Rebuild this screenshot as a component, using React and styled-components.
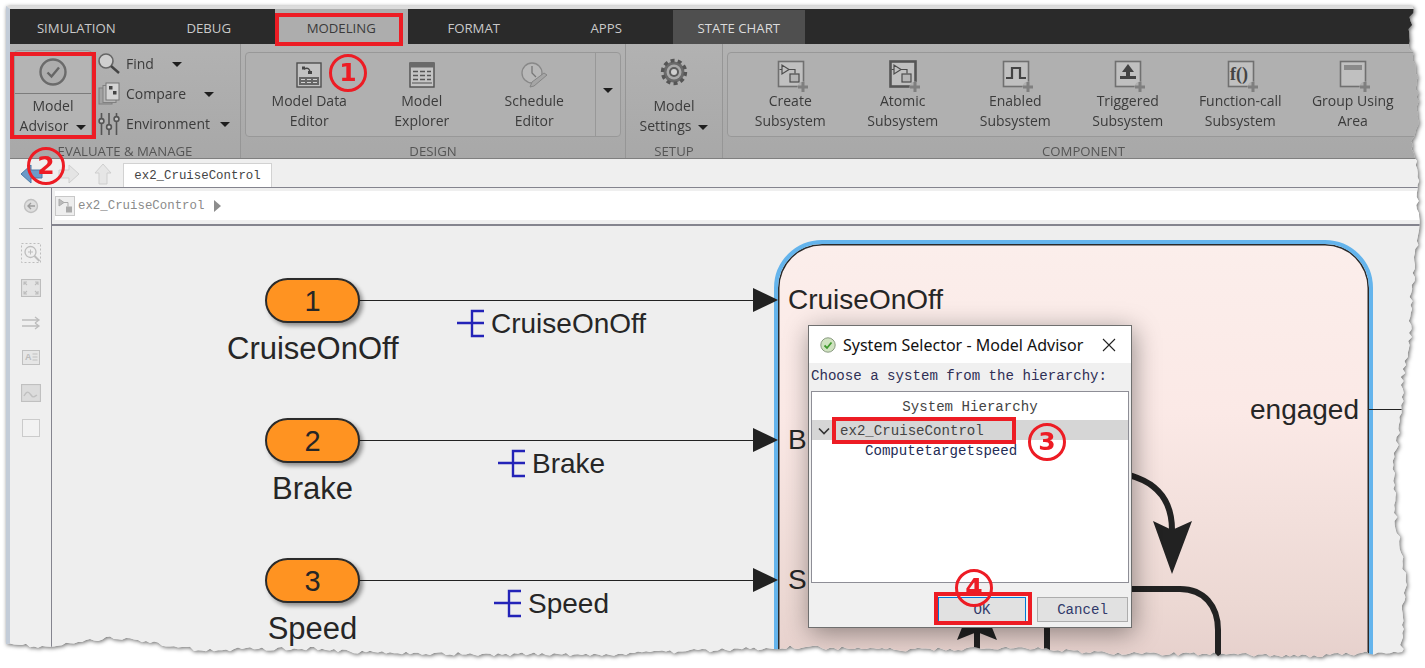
import React from 'react'
import styled, { createGlobalStyle } from 'styled-components'

const GlobalStyle = createGlobalStyle`
  html, body { margin: 0; padding: 0; background: #fff; }
  body { width: 1425px; height: 668px; overflow: hidden; font-family: "Open Sans", "Noto Sans", sans-serif; }
`

// torn paper edge: control points read off the picture, small noise added on top
const RIGHT_EDGE = [[9,1412],[40,1409],[50,1411],[70,1417],[130,1418],[145,1411],[170,1418],[230,1418],[260,1415],[300,1411],[340,1410],[385,1401],[400,1404],[470,1393],[530,1397],[580,1406],[610,1402],[650,1402]]
const BOTTOM_EDGE = [[1402,652],[1300,656],[1200,654],[1100,653],[1030,648],[900,650],[790,647],[600,655],[377,653],[300,648],[200,650],[113,637],[50,646],[6,645]]

function lerp(points, v) {
  for (let i = 0; i < points.length - 1; i++) {
    const [a, b] = points[i]
    const [c, d] = points[i + 1]
    if ((v >= a && v <= c) || (v <= a && v >= c)) return b + ((v - a) / (c - a)) * (d - b)
  }
  return points[points.length - 1][1]
}

function tornClip() {
  let seed = 17
  const noise = () => {
    seed = (seed * 9301 + 49297) % 233280
    return seed / 233280 - 0.5
  }
  const pts = ['0px 0px', `${1412 - 6}px 0px`]
  for (let y = 9; y <= 650; y += 4) pts.push(`${(lerp(RIGHT_EDGE, y) - 6 + noise() * 4).toFixed(1)}px ${y - 6}px`)
  for (let x = 1402; x >= 6; x -= 4) pts.push(`${x - 6}px ${(lerp(BOTTOM_EDGE, x) - 6 + noise() * 4).toFixed(1)}px`)
  return `polygon(${pts.join(',')})`
}
const TORN = tornClip()

const Shot = styled.div`
  position: relative;
  width: 1425px;
  height: 668px;
  overflow: hidden;
`
const Paper = styled.div`
  padding: 6px 0 0 6px;
  filter: drop-shadow(1px 1px 2px rgba(0,0,0,.6));
`
const Window = styled.div`
  clip-path: ${TORN};
  width: 1419px;
  height: 660px;
  box-sizing: border-box;
  display: flex;
  flex-direction: column;
  background: #eee;
  border-top: 3px solid #dcdcdc;
  border-left: 4px solid #c3ccd8;
`

const TabBar = styled.div`
  display: flex;
  height: 35px;
  flex: none;
  background: #2a2a2a;
`
const Tab = styled.div`
  width: 132.5px;
  display: flex;
  align-items: center;
  justify-content: center;
  box-sizing: border-box;
  padding-top: 2px;
  margin-top: ${p => (p.$contextual ? '1px' : '0')};
  font-size: 13.2px;
  color: ${p => (p.$active ? '#3a3a3a' : p.$contextual ? '#dcdcdc' : '#c9c9c9')};
  background: ${p => (p.$active ? '#adadad' : p.$contextual ? '#4f4f4f' : 'transparent')};
`

const Ribbon = styled.div`
  display: flex;
  height: 115px;
  flex: none;
  box-sizing: border-box;
  background: linear-gradient(#b2b2b2, #a8a8a8);
  border-bottom: 1px solid #7f7f7f;
  color: #3b3b3b;
  font-size: 14px;
  line-height: 20px;
`
const Section = styled.div`
  flex: ${p => (p.$grow ? '1' : 'none')};
  width: ${p => (p.$w ? p.$w + 'px' : 'auto')};
  box-sizing: border-box;
  padding: 8px 4px 0;
  border-right: ${p => (p.$grow ? 'none' : '1px solid #969696')};
  display: flex;
  flex-direction: column;
  min-width: 0;
`
const SectionBody = styled.div`
  height: 85px;
  flex: none;
  display: flex;
`
const SectionLabel = styled.div`
  height: 22px;
  line-height: 29px;
  padding-left: ${p => p.$shift || 0}px;
  text-align: center;
  font-size: 13.2px;
  color: #555;
`
const Gallery = styled.div`
  flex: 1;
  display: flex;
  box-sizing: border-box;
  padding-left: ${p => p.$pad}px;
  border: 1px solid #989898;
  border-radius: 4px;
  background: #b0b0b0;
`
const GalleryItem = styled.div`
  width: 112.5px;
  flex: none;
  display: flex;
  flex-direction: column;
  align-items: center;
  text-align: center;
  white-space: pre-line;
`
const ItemIcon = styled.div`
  height: 32px;
  margin-top: 6px;
  display: flex;
  align-items: center;
  justify-content: center;
`
const GalleryMore = styled.div`
  margin-left: auto;
  width: 24px;
  display: flex;
  align-items: center;
  justify-content: center;
  padding-bottom: 8px;
  border-left: 1px solid #989898;
`
const Caret = styled.span`
  display: inline-block;
  width: 0;
  height: 0;
  margin-left: ${p => p.$gap || 0}px;
  vertical-align: middle;
  border-left: 5.5px solid transparent;
  border-right: 5.5px solid transparent;
  border-top: 5.5px solid #1e1e1e;
`
const AdvisorButton = styled.div`
  width: 78px;
  height: 88px;
  margin-top: -2px;
  flex: none;
  box-sizing: border-box;
  border: 1px solid #999;
  border-radius: 4px;
  text-align: center;
  background: #b4b4b4;
`
const AdvisorTop = styled.div`
  height: 42px;
  margin-bottom: 2px;
  display: flex;
  align-items: center;
  justify-content: center;
  border-bottom: 1px solid #7c7c7c;
`
const SmallList = styled.div`
  display: flex;
  flex-direction: column;
  margin: -3px 0 0 5px;
`
const SmallRow = styled.div`
  height: 30px;
  flex: none;
  display: flex;
  align-items: center;
  white-space: nowrap;
`
const SmallIcon = styled.div`
  width: 24px;
  margin-right: 5px;
  display: flex;
  justify-content: center;
`
const SetupItem = styled.div`
  width: 100%;
  text-align: center;
`
const SetupIcon = styled.div`
  height: 44px;
  box-sizing: border-box;
  padding-bottom: 4px;
  display: flex;
  align-items: center;
  justify-content: center;
`

const ToolStrip = styled.div`
  height: 27px;
  flex: none;
  margin-top: 1px;
  display: flex;
  align-items: flex-end;
  background: #efefef;
  box-sizing: border-box;
  padding-left: 10px;
`
const NavRow = styled.div`
  width: 103px;
  height: 24px;
  margin-bottom: 1px;
  display: flex;
  align-items: center;
  gap: 14px;
`
const FileTab = styled.div`
  width: 149px;
  height: 24px;
  box-sizing: border-box;
  background: #fff;
  border: 1px solid #d2d2d2;
  border-bottom: none;
  text-align: center;
  line-height: 24px;
  font-family: "Liberation Mono", monospace;
  font-size: 12.4px;
  color: #444;
`
const Workspace = styled.div`
  flex: 1;
  display: flex;
  min-height: 0;
  border-top: 1px solid #84848e;
`
const Rail = styled.div`
  width: 42px;
  flex: none;
  box-sizing: border-box;
  border-right: 1px solid #84848e;
  background: #efefef;
  display: flex;
  flex-direction: column;
  align-items: center;
`
const RailSlot = styled.div`
  height: 35px;
  flex: none;
  display: flex;
  align-items: center;
  justify-content: center;
`
const RailRule = styled.div`
  width: 24px;
  height: 1px;
  flex: none;
  margin: 5px 0 6px;
  background: #b5b5b5;
`
const Main = styled.div`
  flex: 1;
  display: flex;
  flex-direction: column;
  min-width: 0;
`
const CrumbBar = styled.div`
  height: 38px;
  flex: none;
  box-sizing: border-box;
  padding: 3px 0 4px 3px;
  background: #efefef;
  border-bottom: 2px solid #84848e;
`
const Crumb = styled.div`
  height: 100%;
  display: flex;
  align-items: center;
  background: #fff;
  font-family: "Liberation Mono", monospace;
  font-size: 12.4px;
  color: #8a8a8a;
`
const CrumbIcon = styled.div`
  width: 20px;
  height: 20px;
  margin-right: 3px;
`
const CrumbArrow = styled.span`
  margin-left: 10px;
  width: 0;
  height: 0;
  border-top: 6px solid transparent;
  border-bottom: 6px solid transparent;
  border-left: 7px solid #8d8d8d;
`
const Canvas = styled.div`
  position: relative;
  flex: 1;
  overflow: hidden;
  background: #eeeeee;
  color: #262626;
  font-family: "Liberation Sans", Arial, sans-serif;
`
const Wires = styled.svg`
  position: absolute;
  left: 0;
  top: 0;
`
const StateBox = styled.div`
  position: absolute;
  left: 722px;
  top: 14px;
  width: 599px;
  height: 620px;
  box-sizing: border-box;
  border: 4px solid #64b4ec;
  border-radius: 48px;
  box-shadow: inset 0 0 0 1.5px #2a2a2a;
  background: linear-gradient(#fbeeeb 0, #fbe9e6 170px, #ecd8d3 360px, #e6d0cc 420px);
`
const Pill = styled.div`
  position: absolute;
  left: ${p => p.$x}px;
  top: ${p => p.$y}px;
  width: 95px;
  height: 45px;
  box-sizing: border-box;
  border: 2px solid #2b2b2b;
  border-radius: 23px;
  background: #ff9321;
  box-shadow: 3px 3px 4px rgba(0,0,0,.4);
  font-size: 29px;
  line-height: 42px;
  text-align: center;
`
const PortName = styled.div`
  position: absolute;
  left: 175px;
  width: 171px;
  top: ${p => p.$y}px;
  text-align: center;
  font-size: 31px;
  line-height: 36px;
  white-space: nowrap;
`
const BusLabel = styled.div`
  position: absolute;
  left: ${p => p.$x}px;
  top: ${p => p.$y}px;
  font-size: 28px;
  line-height: 32px;
  white-space: nowrap;
`
const ChartText = styled.div`
  position: absolute;
  left: ${p => p.$x}px;
  top: ${p => p.$y}px;
  font-size: 28px;
  line-height: 32px;
  white-space: nowrap;
`

const Dialog = styled.div`
  position: absolute;
  left: 756px;
  top: 99px;
  width: 324px;
  height: 303px;
  box-sizing: border-box;
  border: 1px solid #6f6f6f;
  background: #f0f0f0;
  box-shadow: 2px 5px 24px rgba(0,0,0,.4);
  font-family: "Liberation Mono", monospace;
  font-size: 14.1px;
  display: flex;
  flex-direction: column;
`
const DialogTitle = styled.div`
  height: 37px;
  flex: none;
  display: flex;
  align-items: center;
  background: #fff;
  padding: 0 15px 0 11px;
  font-family: "Noto Sans", sans-serif;
  font-size: 16px;
  color: #111;
`
const TitleText = styled.span`
  margin-left: 7px;
  flex: 1;
  white-space: nowrap;
`
const Prompt = styled.div`
  height: 28px;
  flex: none;
  line-height: 26px;
  padding-left: 2px;
  color: #2f2f55;
  white-space: nowrap;
`
const Tree = styled.div`
  height: 192px;
  flex: none;
  margin: 0 2px;
  box-sizing: border-box;
  border: 1px solid #8e8e96;
  background: #fff;
  color: #2c3550;
`
const TreeHead = styled.div`
  height: 28px;
  line-height: 30px;
  text-align: center;
  color: #444;
`
const TreeRow = styled.div`
  height: 20px;
  box-sizing: border-box;
  display: flex;
  align-items: center;
  padding: 1px 0 0 ${p => p.$indent}px;
  background: ${p => (p.$selected ? '#d6d6d6' : 'transparent')};
  color: ${p => (p.$selected ? '#444' : '#242c55')};
`
const Chevron = styled.svg`
  margin-right: 10px;
`
const DialogFoot = styled.div`
  flex: 1;
  display: flex;
  justify-content: flex-end;
  gap: 11px;
  padding: 14px 3px 0 0;
`
const DialogButton = styled.div`
  width: ${p => p.$w}px;
  height: 25px;
  box-sizing: border-box;
  text-align: center;
  line-height: 25px;
  background: #e1e1e1;
  color: #30396a;
  border: 1px solid ${p => (p.$focus ? '#0078d7' : '#adadad')};
`

const RedBox = styled.div`
  position: absolute;
  left: ${p => p.$x}px;
  top: ${p => p.$y}px;
  width: ${p => p.$w}px;
  height: ${p => p.$h}px;
  box-sizing: border-box;
  border: 4px solid #ed1c24;
`
const Badge = styled.div`
  position: absolute;
  left: ${p => p.$x - 19}px;
  top: ${p => p.$y - 19}px;
  width: 38px;
  height: 38px;
  box-sizing: border-box;
  border: 3px solid #ed1c24;
  border-radius: 50%;
  color: #ed1c24;
  font-family: "DejaVu Sans", sans-serif;
  font-weight: 700;
  font-size: 25px;
  line-height: 32px;
  text-align: center;
`
const BlockSvg = styled.svg`
  margin: 3px 0 0 5px;
`

const CheckCircle = () => (
  <svg width="30" height="30" viewBox="0 0 30 30">
    <circle cx="15" cy="15" r="12.5" fill="#adadad" stroke="#6b6b6b" strokeWidth="2.4" />
    <path d="M9.5 15.5l4 4 7.5-9" fill="none" stroke="#666" strokeWidth="2.4" />
  </svg>
)
const FindIcon = () => (
  <svg width="24" height="24" viewBox="0 0 24 24">
    <circle cx="9" cy="9" r="7" fill="#cfcfcf" stroke="#666" strokeWidth="1.6" />
    <path d="M14 14l8 7" stroke="#444" strokeWidth="2.4" />
  </svg>
)
const CompareIcon = () => (
  <svg width="22" height="24" viewBox="0 0 22 24">
    <rect x="1" y="6" width="13" height="16" fill="#a2a2a2" stroke="#7e7e7e" />
    <rect x="5" y="3.5" width="13" height="17" fill="#b6b6b6" stroke="#808080" />
    <rect x="8" y="1" width="13" height="17" fill="#d4d4d4" stroke="#777" />
    <path d="M11 4h3.5v3.5H11zM15 9h3.5v3.5H15z" fill="#444" />
  </svg>
)
const SlidersIcon = () => (
  <svg width="22" height="24" viewBox="0 0 22 24" stroke="#555" strokeWidth="1.6" fill="#c4c4c4">
    <path d="M3.5 1v22M11 1v22M18.5 1v22" />
    <circle cx="3.5" cy="9" r="2.4" />
    <circle cx="11" cy="15" r="2.4" />
    <circle cx="18.5" cy="7" r="2.4" />
  </svg>
)
const ModelDataIcon = () => (
  <svg width="26" height="26" viewBox="0 0 26 26">
    <rect x="1" y="1" width="24" height="24" fill="#c2c2c2" stroke="#4f4f4f" strokeWidth="1.4" />
    <path d="M8 7c4-2 6 0 6 4" fill="none" stroke="#444" strokeWidth="1.4" />
    <rect x="6" y="4.5" width="3" height="3" fill="#444" />
    <rect x="12" y="9" width="4" height="3" fill="#444" />
    <rect x="3" y="15" width="20" height="8" fill="#666" />
    <path d="M5 17.5h4M11 17.5h4M17 17.5h4M5 20.5h4M11 20.5h4M17 20.5h4" stroke="#d0d0d0" />
  </svg>
)
const ExplorerIcon = () => (
  <svg width="26" height="26" viewBox="0 0 26 26">
    <rect x="1" y="1" width="24" height="24" fill="#c4c4c4" stroke="#4f4f4f" strokeWidth="1.4" />
    <rect x="1" y="1" width="24" height="4.5" fill="#6a6a6a" />
    <path d="M4 9.5h5M11 9.5h5M18 9.5h4M4 13.5h5M11 13.5h5M18 13.5h4M4 17.5h5M11 17.5h5M18 17.5h4" stroke="#555" strokeWidth="1.6" />
    <rect x="3" y="20" width="20" height="2" fill="#8a8a8a" />
  </svg>
)
const ScheduleIcon = () => (
  <svg width="28" height="28" viewBox="0 0 28 28" fill="none">
    <circle cx="12" cy="12" r="10" fill="#b8b8b8" stroke="#888" strokeWidth="1.3" />
    <path d="M12 5v7l4 4" stroke="#777" strokeWidth="1.3" />
    <path d="M10 26l2-5 12-9 3 2-13 11z" fill="#a5a5a5" stroke="#858585" />
  </svg>
)
const GearIcon = () => (
  <svg width="28" height="28" viewBox="0 0 28 28">
    <circle cx="14" cy="14" r="10.5" fill="#6a6a6a" />
    <circle cx="14" cy="14" r="11.5" fill="none" stroke="#555" strokeWidth="3.4" strokeDasharray="4 3.2" />
    <circle cx="14" cy="14" r="7.5" fill="#a9a9a9" />
    <circle cx="14" cy="14" r="5" fill="#5c5c5c" />
    <circle cx="14" cy="14" r="3" fill="#cfcfcf" />
  </svg>
)
const BlockFrame = ({ heavy, children }) => (
  <BlockSvg width="32" height="33" viewBox="0 0 32 33">
    <rect x="1.5" y="1.5" width="25" height="25" fill="#c0c0c0" stroke={heavy ? '#555' : '#707070'} strokeWidth={heavy ? 2.6 : 1.6} />
    {children}
    <circle cx="26" cy="27" r="5.5" fill="#b0b0b0" />
    <path d="M24.5 22h3v3.5H31v3h-3.5V32h-3v-3.5H21v-3h3.5z" fill="#7f7f7f" />
  </BlockSvg>
)
const SubsystemGlyph = () => (
  <g fill="none" stroke="#4c4c4c" strokeWidth="1.2">
    <path d="M5 5v9l7-4.5zM2.5 9.5H5M12 9.5h6v4" />
    <rect x="13" y="14" width="9" height="8" fill="#b4b4b4" />
  </g>
)
const PulseGlyph = () => <path d="M4 18h6V8h8v10h6" fill="none" stroke="#444" strokeWidth="2.2" />
const TriggerGlyph = () => <path d="M14 4l6 8h-4v4h6v3H6v-3h6v-4H8z" fill="#444" />
const FunctionGlyph = () => (
  <text x="3" y="20" fontFamily="'Liberation Serif', serif" fontWeight="700" fontSize="18" fill="#444">f()</text>
)
const AreaGlyph = () => <rect x="5" y="5" width="18" height="5" fill="#8a8a8a" />

const BackArrow = () => (
  <svg width="24" height="20" viewBox="0 0 24 20">
    <path d="M1 10l10-9v5h11v8H11v5z" fill="#6c9ac8" stroke="#4a7aa8" />
  </svg>
)
const ForwardArrow = () => (
  <svg width="22" height="20" viewBox="0 0 22 20">
    <path d="M21 10l-10-9v5H1v8h10v5z" fill="#e4e4e4" stroke="#cfcfcf" />
  </svg>
)
const UpArrow = () => (
  <svg width="18" height="22" viewBox="0 0 18 22">
    <path d="M9 1l8 9h-4v11H5V10H1z" fill="#e6e6e6" stroke="#cfcfcf" />
  </svg>
)

const RailBack = () => (
  <svg width="16" height="16" viewBox="0 0 16 16">
    <circle cx="8" cy="8" r="6.5" fill="#dedede" stroke="#c0c0c0" strokeWidth="1.4" />
    <path d="M12 8H5M8 5L5 8l3 3" fill="none" stroke="#9c9c9c" strokeWidth="1.4" />
  </svg>
)
const RailZoom = () => (
  <svg width="20" height="20" viewBox="0 0 20 20" fill="none" stroke="#bdbdbd">
    <rect x=".5" y=".5" width="19" height="19" strokeDasharray="2 2" />
    <circle cx="9.5" cy="9" r="5.5" strokeWidth="1.3" />
    <path d="M9.5 6.5v5M7 9h5" />
    <path d="M13.5 13l5 5" strokeWidth="2" />
  </svg>
)
const RailFit = () => (
  <svg width="20" height="18" viewBox="0 0 20 18" fill="none" stroke="#bdbdbd">
    <rect x=".5" y=".5" width="19" height="17" fill="#e4e4e4" strokeWidth="1.2" />
    <path d="M3 6V3h3M3 3l3 3M17 6V3h-3M17 3l-3 3M3 12v3h3M3 15l3-3M17 12v3h-3M17 15l-3-3" strokeWidth="1.1" />
  </svg>
)
const RailArrows = () => (
  <svg width="20" height="14" viewBox="0 0 20 14" fill="none" stroke="#bdbdbd" strokeWidth="1.3">
    <path d="M1 4h17M14 1l4 3-4 3M1 10h17M14 7l4 3-4 3" />
  </svg>
)
const RailNote = () => (
  <svg width="18" height="15" viewBox="0 0 18 15" fill="none" stroke="#c0c0c0">
    <rect x=".5" y=".5" width="17" height="14" fill="#e6e6e6" />
    <text x="3" y="10" fontFamily="'Liberation Sans', sans-serif" fontSize="9" fontWeight="700" fill="#bbb" stroke="none">A</text>
    <path d="M10.5 4h5M10.5 7h5M10.5 10h5" />
  </svg>
)
const RailImage = () => (
  <svg width="20" height="18" viewBox="0 0 20 18" fill="none" stroke="#c0c0c0">
    <rect x=".5" y=".5" width="19" height="17" fill="#dcdcdc" strokeWidth="1.2" />
    <path d="M3 12c3-6 5-4 7-1s3 2 6 0" strokeWidth="1.4" />
  </svg>
)
const RailBlank = () => (
  <svg width="18" height="18" viewBox="0 0 18 18">
    <rect x=".5" y=".5" width="17" height="17" fill="#f2f2f2" stroke="#cbcbcb" />
  </svg>
)
const CrumbGlyph = () => (
  <svg width="20" height="20" viewBox="0 0 20 20" fill="none">
    <rect x=".5" y=".5" width="19" height="19" fill="#eee" stroke="#c8c8c8" />
    <path d="M4 3v7l5-3.5z" fill="#bbb" stroke="#aaa" />
    <path d="M9 6.5h4v4" stroke="#aaa" />
    <rect x="11" y="10.5" width="6" height="6" fill="#aaa" />
  </svg>
)
const DialogLogo = () => (
  <svg width="16" height="16" viewBox="0 0 16 16">
    <circle cx="8" cy="8" r="7.2" fill="#cfe3c0" stroke="#8a9a80" />
    <path d="M4.5 8.5l2.5 2.5 4.5-5.5" fill="none" stroke="#3f9a2e" strokeWidth="1.8" />
  </svg>
)

// wires, bus marks and the transitions use page coordinates thanks to the viewBox
const busMark = (dx, dy) => `M${457 + dx} ${323 + dy}h27M${484 + dx} ${311 + dy}h-12v25h12`

const wiresY = [300, 440, 580]

const designItems = [
  { icon: <ModelDataIcon />, label: 'Model Data\nEditor' },
  { icon: <ExplorerIcon />, label: 'Model\nExplorer' },
  { icon: <ScheduleIcon />, label: 'Schedule\nEditor' },
]
const componentItems = [
  { icon: <BlockFrame><SubsystemGlyph /></BlockFrame>, label: 'Create\nSubsystem' },
  { icon: <BlockFrame heavy><SubsystemGlyph /></BlockFrame>, label: 'Atomic\nSubsystem' },
  { icon: <BlockFrame><PulseGlyph /></BlockFrame>, label: 'Enabled\nSubsystem' },
  { icon: <BlockFrame><TriggerGlyph /></BlockFrame>, label: 'Triggered\nSubsystem' },
  { icon: <BlockFrame><FunctionGlyph /></BlockFrame>, label: 'Function-call\nSubsystem' },
  { icon: <BlockFrame><AreaGlyph /></BlockFrame>, label: 'Group Using\nArea' },
]

const App = () => (
  <Shot>
    <GlobalStyle />
    <Paper>
      <Window>
        <TabBar>
          <Tab>SIMULATION</Tab>
          <Tab>DEBUG</Tab>
          <Tab $active>MODELING</Tab>
          <Tab>FORMAT</Tab>
          <Tab>APPS</Tab>
          <Tab $contextual>STATE CHART</Tab>
        </TabBar>
        <Ribbon>
          <Section $w={231}>
            <SectionBody>
              <AdvisorButton>
                <AdvisorTop><CheckCircle /></AdvisorTop>
                <div>Model</div>
                <div>Advisor<Caret $gap={8} /></div>
              </AdvisorButton>
              <SmallList>
                <SmallRow><SmallIcon><FindIcon /></SmallIcon>Find<Caret $gap={18} /></SmallRow>
                <SmallRow><SmallIcon><CompareIcon /></SmallIcon>Compare<Caret $gap={18} /></SmallRow>
                <SmallRow><SmallIcon><SlidersIcon /></SmallIcon>Environment<Caret $gap={10} /></SmallRow>
              </SmallList>
            </SectionBody>
            <SectionLabel>EVALUATE &amp; MANAGE</SectionLabel>
          </Section>
          <Section $w={385}>
            <SectionBody>
              <Gallery $pad={7}>
                {designItems.map(it => (
                  <GalleryItem key={it.label}>
                    <ItemIcon>{it.icon}</ItemIcon>
                    {it.label}
                  </GalleryItem>
                ))}
                <GalleryMore><Caret /></GalleryMore>
              </Gallery>
            </SectionBody>
            <SectionLabel>DESIGN</SectionLabel>
          </Section>
          <Section $w={97}>
            <SectionBody>
              <SetupItem>
                <SetupIcon><GearIcon /></SetupIcon>
                <div>Model</div>
                <div>Settings<Caret $gap={7} /></div>
              </SetupItem>
            </SectionBody>
            <SectionLabel>SETUP</SectionLabel>
          </Section>
          <Section $grow>
            <SectionBody>
              <Gallery $pad={6}>
                {componentItems.map(it => (
                  <GalleryItem key={it.label}>
                    <ItemIcon>{it.icon}</ItemIcon>
                    {it.label}
                  </GalleryItem>
                ))}
              </Gallery>
            </SectionBody>
            <SectionLabel $shift={19}>COMPONENT</SectionLabel>
          </Section>
        </Ribbon>
        <ToolStrip>
          <NavRow>
            <BackArrow />
            <ForwardArrow />
            <UpArrow />
          </NavRow>
          <FileTab>ex2_CruiseControl</FileTab>
        </ToolStrip>
        <Workspace>
          <Rail>
            <RailSlot><RailBack /></RailSlot>
            <RailRule />
            <RailSlot><RailZoom /></RailSlot>
            <RailSlot><RailFit /></RailSlot>
            <RailSlot><RailArrows /></RailSlot>
            <RailSlot><RailNote /></RailSlot>
            <RailSlot><RailImage /></RailSlot>
            <RailSlot><RailBlank /></RailSlot>
          </Rail>
          <Main>
            <CrumbBar>
              <Crumb>
                <CrumbIcon><CrumbGlyph /></CrumbIcon>
                ex2_CruiseControl
                <CrumbArrow />
              </Crumb>
            </CrumbBar>
            <Canvas>
              <StateBox />
              <Wires width="1373" height="440" viewBox="52 226 1373 440">
                {wiresY.map(y => (
                  <g key={y}>
                    <path d={`M359 ${y + 0.5}H755`} stroke="#222" strokeWidth="1.2" />
                    <path d={`M753 ${y - 12}L778 ${y}L753 ${y + 12}z`} fill="#222" />
                  </g>
                ))}
                <path d={busMark(0, 0) + busMark(41, 140) + busMark(37, 280)} fill="none" stroke="#2323b8" strokeWidth="2.4" />
                <path d="M1369 409.5H1406" stroke="#222" strokeWidth="1.2" />
                <path d="M1100 471C1145 473 1172 490 1172 530" fill="none" stroke="#222" strokeWidth="6" />
                <path d="M1153 521L1172 530L1192 521L1172 574z" fill="#222" />
                <path d="M1100 589H1180C1204 589 1218 606 1218 630V670" fill="none" stroke="#222" strokeWidth="6" />
                <path d="M1047 620V670M977 620V670" stroke="#222" strokeWidth="6" fill="none" />
                <path d="M977 590L997 640L977 632L957 640z" fill="#222" />
              </Wires>
              <Pill $x={213} $y={52}>1</Pill>
              <Pill $x={213} $y={192}>2</Pill>
              <Pill $x={213} $y={332}>3</Pill>
              <PortName $y={105}>CruiseOnOff</PortName>
              <PortName $y={245}>Brake</PortName>
              <PortName $y={385}>Speed</PortName>
              <BusLabel $x={439} $y={82}>CruiseOnOff</BusLabel>
              <BusLabel $x={480} $y={222}>Brake</BusLabel>
              <BusLabel $x={476} $y={362}>Speed</BusLabel>
              <ChartText $x={736} $y={58}>CruiseOnOff</ChartText>
              <ChartText $x={736} $y={198}>Br</ChartText>
              <ChartText $x={736} $y={338}>Sp</ChartText>
              <ChartText $x={1198} $y={168}>engaged</ChartText>
              <Dialog>
                <DialogTitle>
                  <DialogLogo />
                  <TitleText>System Selector - Model Advisor</TitleText>
                  <svg width="14" height="14" viewBox="0 0 14 14">
                    <path d="M1 1l12 12M13 1L1 13" stroke="#222" strokeWidth="1.1" />
                  </svg>
                </DialogTitle>
                <Prompt>Choose a system from the hierarchy:</Prompt>
                <Tree>
                  <TreeHead>System Hierarchy</TreeHead>
                  <TreeRow $selected $indent={6}>
                    <Chevron width="12" height="8" viewBox="0 0 12 8">
                      <path d="M1 1.5l5 5 5-5" fill="none" stroke="#333" strokeWidth="1.6" />
                    </Chevron>
                    ex2_CruiseControl
                  </TreeRow>
                  <TreeRow $indent={53}>Computetargetspeed</TreeRow>
                </Tree>
                <DialogFoot>
                  <DialogButton $w={88} $focus>OK</DialogButton>
                  <DialogButton $w={91}>Cancel</DialogButton>
                </DialogFoot>
              </Dialog>
            </Canvas>
          </Main>
        </Workspace>
      </Window>
    </Paper>
    <RedBox $x={275} $y={13} $w={128} $h={33} />
    <RedBox $x={10} $y={52} $w={86} $h={87} />
    <RedBox $x={832} $y={417} $w={184} $h={27} />
    <RedBox $x={934} $y={592} $w={98} $h={33} />
    <Badge $x={348} $y={73}>1</Badge>
    <Badge $x={46} $y={166}>2</Badge>
    <Badge $x={1047} $y={442}>3</Badge>
    <Badge $x={974} $y={588}>4</Badge>
  </Shot>
)

export default App
